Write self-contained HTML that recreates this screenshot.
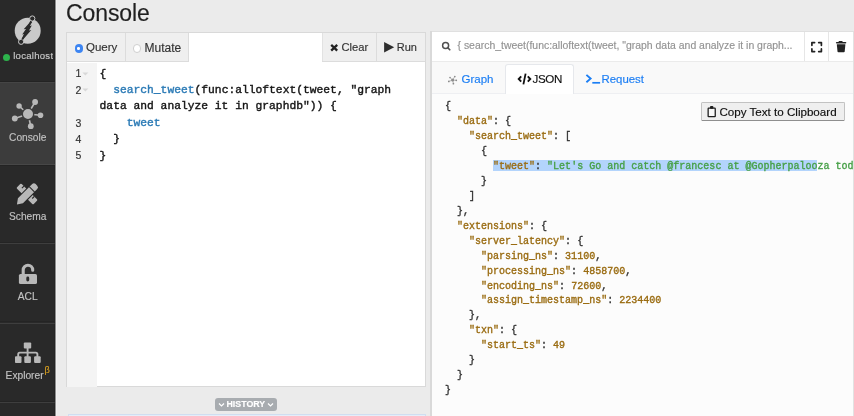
<!DOCTYPE html>
<html><head><meta charset="utf-8">
<style>
*{box-sizing:border-box;margin:0;padding:0}
html,body{-webkit-text-stroke:0.15px;-webkit-font-smoothing:antialiased;width:854px;height:416px;overflow:hidden;background:#ebebeb;font-family:"Liberation Sans",sans-serif;position:relative}
.a{position:absolute;white-space:pre}
#sb{position:absolute;left:0;top:0;width:55px;height:416px;background:#292929}
#sbedge{position:absolute;left:55px;top:0;width:2px;height:416px;background:linear-gradient(90deg,#8e8e8e 50%,#f0f0f0 50%)}
.sec{position:absolute;left:0;width:55px;height:79.3px;border-top:1px solid #3e3e3e}
.lbl{position:absolute;left:0;width:55.5px;text-align:center;font-size:10.2px;line-height:10px;color:#c2c2c2}
#title{left:66px;top:1.6px;font-size:23px;line-height:23px;color:#1f1f1f;letter-spacing:-0.1px}
#lp{position:absolute;left:66px;top:32px;width:360px;height:355px;border:1px solid #d9d9d9;background:#fff}
#lhdr{position:absolute;left:0;top:0;width:357px;height:29px;background:#efefef;border-bottom:1px solid #dcdcdc}
.btn{position:absolute;top:0;height:29px;border-right:1px solid #dcdcdc;font-size:12px;color:#333}
#gut{position:absolute;left:0;top:29.5px;width:30px;height:324px;background:#f4f4f4}
.mono{font-family:"Liberation Mono",monospace}
.code{position:absolute;font-size:11.3px;line-height:16.4px;color:#151515;white-space:pre;-webkit-text-stroke:0.4px}
.ln{position:absolute;left:0;width:14.3px;text-align:right;font-size:10.5px;line-height:16.4px;color:#333}
#rp{position:absolute;left:432px;top:31px;width:422px;height:385px;background:#fcfcfc}
#tabs{position:absolute;left:0;top:29.5px;width:422px;height:32.5px;background:#f7f7f7;border-bottom:1px solid #e3e3e3}
#rhdr{position:absolute;left:0;top:0;width:422px;height:29.5px;background:#fff;border-bottom:1px solid #dedede;border-top:1px solid #dedede}
.json{position:absolute;left:444.9px;font-family:"Liberation Mono",monospace;font-size:10.025px;line-height:14.94px;color:#333;width:408px;overflow:hidden;white-space:pre;-webkit-text-stroke:0.35px}
.k{color:#9a6c12}
.s{color:#47a047}
.n{color:#9a6c12}
</style></head><body><div style="position:absolute;left:0;top:0;width:854px;height:416px;will-change:transform">
<div id="sb">
  <!-- logo -->
  <svg class="a" style="left:13px;top:15px" width="30" height="31" viewBox="0 0 30 31">
    <circle cx="14.7" cy="15.8" r="13" fill="#c9c9c9"/>
    <path d="M19.3 3.5 L8.1 26.8" stroke="#292929" stroke-width="1.6"/>
    <circle cx="19.3" cy="3.5" r="2.6" fill="#292929" stroke="#c9c9c9" stroke-width="1"/>
    <circle cx="8.1" cy="26.8" r="2.6" fill="#292929" stroke="#c9c9c9" stroke-width="1"/>
    <path d="M17.6 6.6 L10.7 14.3 L13.0 13.9 L9.2 19.4 L11.5 19.0 L8.4 24.5 L9.9 24.7 L18.3 15.1 L16.0 15.5 L18.8 10.4 L16.7 10.9 L19.2 6.9 Z" fill="#292929"/>
  </svg>
  <div class="a" style="left:3.1px;top:53.7px;width:7.1px;height:7.1px;border-radius:50%;background:#2db34c"></div>
  <div class="a" style="left:13.2px;top:51.3px;font-size:9.6px;line-height:10px;color:#c9c9c9;width:39.8px;overflow:hidden;letter-spacing:0.25px">localhost</div>

  <div class="sec" style="top:82px;background:#3c3c3c;border-top-color:#454545;height:82.5px">
    <svg class="a" style="left:10px;top:13.2px" width="36" height="34" viewBox="0 0 36 34">
      <g stroke="#b8b8b8" stroke-width="1.6">
        <line x1="18" y1="18" x2="25.1" y2="6"/>
        <line x1="18" y1="18" x2="9.1" y2="10"/>
        <line x1="18" y1="18" x2="4.8" y2="22.5"/>
        <line x1="18" y1="18" x2="30.5" y2="19.3"/>
        <line x1="18" y1="18" x2="20.8" y2="30.2"/>
      </g>
      <circle cx="18" cy="18" r="5.7" fill="#b8b8b8" stroke="#3c3c3c" stroke-width="1.4"/>
      <g fill="#b8b8b8">
        <circle cx="25.1" cy="6" r="2.9"/>
        <circle cx="9.1" cy="10" r="2.7"/>
        <circle cx="4.8" cy="22.5" r="2.9"/>
        <circle cx="30.5" cy="19.3" r="2.8"/>
        <circle cx="20.8" cy="30.2" r="2.9"/>
      </g>
    </svg>
    <div class="lbl" style="top:50.1px">Console</div>
  </div>
  <div class="sec" style="top:164px">
    <svg class="a" style="left:11.2px;top:13.1px" width="32" height="32" viewBox="0 0 416 416">
      <g transform="translate(208 208) rotate(45)">
        <rect x="-154" y="-43" width="308" height="86" rx="14" fill="#b8b8b8"/>
        <rect x="-108" y="-45" width="15" height="38" fill="#292929"/>
        <rect x="82" y="-45" width="15" height="38" fill="#292929"/>
      </g>
      <g transform="translate(202 218) rotate(-45)">
        <path d="M-190 0 L-118 -60 L150 -60 Q196 -60 196 -14 L196 14 Q196 60 150 60 L-118 60 Z" fill="#292929"/>
        <path d="M-177 0 L-112 -46 L150 -46 Q182 -46 182 -14 L182 14 Q182 46 150 46 L-112 46 Z" fill="#b8b8b8"/>
        <rect x="92" y="-50" width="14" height="100" fill="#292929"/>
      </g>
    </svg>
    <div class="lbl" style="top:47.3px">Schema</div>
  </div>
  <div class="sec" style="top:243.3px">
    <svg class="a" style="left:18px;top:18.4px" width="20" height="22" viewBox="0 0 20 22">
      <path d="M5.2 12 V6.95 A4.75 4.75 0 0 1 14.7 6.95 V7.2" fill="none" stroke="#b8b8b8" stroke-width="3.1" stroke-linecap="round"/>
      <rect x="0.9" y="11" width="18.1" height="10" rx="1.6" fill="#b8b8b8"/>
      <rect x="8.3" y="13.5" width="2.9" height="5" rx="1.45" fill="#292929"/>
    </svg>
    <div class="lbl" style="top:47.3px">ACL</div>
  </div>
  <div class="sec" style="top:322.6px">
    <svg class="a" style="left:15px;top:18.1px" width="27" height="22" viewBox="0 0 27 22">
      <g fill="#b8b8b8">
        <rect x="8.8" y="0.6" width="7.4" height="5.8" rx="1"/>
        <rect x="-0.1" y="14.3" width="6.6" height="6.6" rx="1"/>
        <rect x="9.3" y="14.3" width="6.6" height="6.6" rx="1"/>
        <rect x="19.1" y="14.3" width="6.6" height="6.6" rx="1"/>
      </g>
      <path d="M3.2 15 V12.2 Q3.2 10.6 4.8 10.6 H20.8 Q22.4 10.6 22.4 12.2 V15 M12.6 6 V15" fill="none" stroke="#b8b8b8" stroke-width="1.9"/>
    </svg>
    <div class="a" style="left:5.6px;top:47.3px;font-size:10.2px;line-height:10px;color:#c2c2c2">Explorer</div>
    <div class="a" style="left:44.6px;top:42.8px;font-size:9.2px;line-height:9px;color:#d9a020">β</div>
  </div>
  <div class="sec" style="top:402px"></div>
</div>
<div id="sbedge"></div>
<div class="a" style="left:54px;top:0;width:1px;height:416px;background:rgba(0,0,0,0.12)"></div>
<div class="a" style="left:0;top:81px;width:55px;height:1px;background:#232323"></div>
<div class="a" style="left:0;top:164px;width:55px;height:1px;background:#474747"></div>
<div class="a" style="left:0;top:165px;width:55px;height:1px;background:#232323"></div>
<div class="a" style="left:0;top:242px;width:55px;height:1px;background:#242424"></div>
<div class="a" style="left:0;top:401px;width:55px;height:1px;background:#242424"></div>
<div class="a" style="left:0;top:321px;width:55px;height:1px;background:#242424"></div>

<div id="title" class="a">Console</div>

<div id="lp">
  <div id="gut"></div>
  <div class="ln" style="top:32.4px">1</div>
  <div class="ln" style="top:48.8px">2</div>
  <div class="ln" style="top:81.6px">3</div>
  <div class="ln" style="top:98px">4</div>
  <div class="ln" style="top:114.4px">5</div>
  <svg class="a" style="left:15px;top:38.7px" width="7" height="4" viewBox="0 0 7 4"><path d="M0.4 0.4 H6.4 L3.4 3.5 Z" fill="#d8d8d8"/></svg>
  <svg class="a" style="left:15px;top:55.1px" width="7" height="4" viewBox="0 0 7 4"><path d="M0.4 0.4 H6.4 L3.4 3.5 Z" fill="#d8d8d8"/></svg>
  <div class="code mono" style="left:32.6px;top:32.6px">{
  <span style="color:#2c7bb6">search_tweet</span>(func:alloftext(tweet, "graph
data and analyze it in graphdb")) {
    <span style="color:#2c7bb6">tweet</span>
  }
}</div>
</div>

<div class="a" style="left:67px;top:33px;width:358px;height:29px;background:#efefef;border-bottom:1px solid #dcdcdc"></div>
<div class="a" style="left:125px;top:33px;width:1px;height:28px;background:#dcdcdc"></div>
<div class="a" style="left:188px;top:33px;width:1px;height:28px;background:#dcdcdc"></div>
<div class="a" style="left:189px;top:33px;width:133px;height:29px;background:#fff"></div>
<div class="a" style="left:322px;top:33px;width:1px;height:28px;background:#e2e2e2"></div>
<div class="a" style="left:376px;top:33px;width:1px;height:28px;background:#dcdcdc"></div>
<div class="a" style="left:74.5px;top:44.3px;width:8.5px;height:8.5px;border-radius:50%;background:#3d85f2"></div>
<div class="a" style="left:77.4px;top:47.2px;width:2.7px;height:2.7px;border-radius:50%;background:#fff"></div>
<div class="a" style="left:86px;top:41.9px;font-size:11.5px;line-height:11.5px;color:#333">Query</div>
<div class="a" style="left:132.8px;top:44.3px;width:8.5px;height:8.5px;border-radius:50%;background:#fff;border:1px solid #cfcfcf"></div>
<div class="a" style="left:144.5px;top:41.5px;font-size:12px;line-height:12px;color:#333">Mutate</div>
<svg class="a" style="left:329px;top:42.5px" width="10" height="9" viewBox="0 0 10 9"><path d="M2.2 1.8 L8.2 7.6 M8.2 1.8 L2.2 7.6" stroke="#222" stroke-width="2.3"/></svg>
<div class="a" style="left:341.5px;top:41.7px;font-size:11.2px;line-height:11.2px;color:#333">Clear</div>
<svg class="a" style="left:384px;top:41.8px" width="11" height="11" viewBox="0 0 11 11"><path d="M0.1 0.1 L10.2 5.3 L0.1 10.6 Z" fill="#2e2e2e"/></svg>
<div class="a" style="left:396.7px;top:41.9px;font-size:11px;line-height:11px;color:#333">Run</div>
<div id="rp"></div>
<div class="a" style="left:430px;top:31px;width:2px;height:385px;background:#d9d9d9"></div>
<div class="a" style="left:432px;top:31px;width:422px;height:31px;background:#fff;border-top:1px solid #e0e0e0;border-bottom:1px solid #ebebeb"></div>
<div class="a" style="left:853px;top:32px;width:1px;height:384px;background:#e2e2e2"></div>
<div class="a" style="left:432px;top:62px;width:421px;height:32px;background:#f9f9f9;border-bottom:1px solid #eeeff2"></div>
<svg class="a" style="left:441px;top:41.2px" width="11" height="11" viewBox="0 0 11 11"><circle cx="4.6" cy="4.6" r="3" fill="none" stroke="#505050" stroke-width="1.5"/><path d="M6.9 6.9 L8.8 8.8" stroke="#505050" stroke-width="1.6" stroke-linecap="round"/></svg>
<div class="a" style="left:457.5px;top:39.5px;font-size:10.45px;line-height:11px;color:#939393">{ search_tweet(func:alloftext(tweet, "graph data and analyze it in graph...</div>
<div class="a" style="left:804px;top:32px;width:1px;height:29px;background:#e6e6e6"></div>
<div class="a" style="left:828px;top:32px;width:1px;height:29px;background:#e6e6e6"></div>
<svg class="a" style="left:810px;top:40.5px" width="14" height="13" viewBox="0 0 14 13"><path d="M1.9 4.3 V1.6 H4.6 M8.7 1.6 H11.4 V4.3 M11.4 7.9 V10.6 H8.7 M4.6 10.6 H1.9 V7.9" fill="none" stroke="#222" stroke-width="1.7" stroke-linecap="round" stroke-linejoin="round"/></svg>
<svg class="a" style="left:835px;top:40px" width="12" height="13" viewBox="0 0 12 13"><rect x="3.6" y="0.9" width="4" height="2" rx="0.6" fill="#222"/><rect x="0.9" y="1.9" width="10.4" height="1.7" rx="0.8" fill="#222"/><path d="M1.8 4.3 H10.4 L9.7 11.4 Q9.6 12.2 8.8 12.2 H3.4 Q2.6 12.2 2.5 11.4 Z" fill="#222"/></svg>
<div class="a" style="left:505px;top:64px;width:69px;height:30px;background:#fff;border:1px solid #e6e8ec;border-bottom:none;border-radius:3px 3px 0 0"></div>
<svg class="a" style="left:445px;top:71px" width="16" height="16" viewBox="0 0 16 16"><g stroke="#8c8c8c" stroke-width="0.6"><path d="M7.65 9.1 L9.8 5.5 M7.65 9.1 L5 6.5 M7.65 9.1 L3.8 10.4 M7.65 9.1 L11.3 9.3 M7.65 9.1 L8.4 12.7"/></g><g fill="#8c8c8c"><circle cx="7.65" cy="9.1" r="1.5"/><circle cx="9.8" cy="5.5" r="0.85"/><circle cx="5" cy="6.5" r="0.85"/><circle cx="3.8" cy="10.4" r="0.85"/><circle cx="11.3" cy="9.3" r="0.85"/><circle cx="8.4" cy="12.7" r="0.85"/></g></svg>
<div class="a" style="left:461.5px;top:73.5px;font-size:11.5px;line-height:11.5px;color:#1b7ef4">Graph</div>
<svg class="a" style="left:517px;top:72.5px" width="15" height="12" viewBox="0 0 15 12"><path d="M4.2 3.3 L1.7 6 L4.2 8.7 M10.8 3.3 L13.3 6 L10.8 8.7" fill="none" stroke="#111" stroke-width="1.9"/><path d="M8.6 0.6 L6.4 11.4" stroke="#111" stroke-width="1.8"/></svg>
<div class="a" style="left:532.5px;top:73.3px;font-size:11.6px;line-height:11.5px;color:#111;letter-spacing:-0.35px">JSON</div>
<svg class="a" style="left:585px;top:73px" width="16" height="12" viewBox="0 0 16 12"><path d="M1.4 1.9 L5.6 5.6 L1.4 9.3" fill="none" stroke="#1b7ef4" stroke-width="1.9"/><path d="M7.3 9.8 H15.1" stroke="#1b7ef4" stroke-width="1.7"/></svg>
<div class="a" style="left:601.5px;top:73.5px;font-size:11.4px;line-height:11.5px;color:#1b7ef4">Request</div>
<div class="a" style="left:701px;top:102px;width:144px;height:19px;background:#efefef;border:1px solid #c2c2c2;border-bottom:1.5px solid #8f8f8f;border-radius:1.5px"></div>
<svg class="a" style="left:707px;top:105px" width="10" height="13" viewBox="0 0 10 13"><rect x="1.15" y="3.2" width="7.1" height="8.45" rx="0.5" fill="#f8f8f8" stroke="#1e1e1e" stroke-width="1.3"/><rect x="3" y="1" width="3.4" height="2.8" rx="1" fill="#1e1e1e"/></svg>
<div class="a" style="left:719.5px;top:105.5px;font-size:11.6px;line-height:11.6px;color:#0e0e0e">Copy Text to Clipboard</div>
<div class="a" style="left:493.3px;top:159.7px;width:324px;height:11.8px;background:#b3d4fc"></div>
<div class="json" style="top:100.3px">{
  <span class="k">"data"</span>: {
    <span class="k">"search_tweet"</span>: [
      {
        <span class="k">"tweet"</span>: <span class="s">"Let's Go and catch @francesc at @Gopherpalooza today"</span>
      }
    ]
  },
  <span class="k">"extensions"</span>: {
    <span class="k">"server_latency"</span>: {
      <span class="k">"parsing_ns"</span>: <span class="n">31100</span>,
      <span class="k">"processing_ns"</span>: <span class="n">4858700</span>,
      <span class="k">"encoding_ns"</span>: <span class="n">72600</span>,
      <span class="k">"assign_timestamp_ns"</span>: <span class="n">2234400</span>
    },
    <span class="k">"txn"</span>: {
      <span class="k">"start_ts"</span>: <span class="n">49</span>
    }
  }
}</div>
<div class="a" style="left:67.6px;top:414px;width:358px;height:2px;background:#e4eef9;border:1px solid #d0def0;border-bottom:none"></div>
<div class="a" style="left:215px;top:398px;width:61.5px;height:12.5px;border-radius:3px;background:#a8acb0"></div>
<svg class="a" style="left:217.5px;top:401.5px" width="7" height="6" viewBox="0 0 7 6"><path d="M1 1.5 L3.5 4 L6 1.5" fill="none" stroke="#fff" stroke-width="1.2"/></svg>
<svg class="a" style="left:266.8px;top:401.5px" width="7" height="6" viewBox="0 0 7 6"><path d="M1 1.5 L3.5 4 L6 1.5" fill="none" stroke="#fff" stroke-width="1.2"/></svg>
<div class="a" style="left:226.5px;top:400px;font-size:8.8px;line-height:8.8px;font-weight:bold;color:#fff">HISTORY</div>

</div></body></html>
